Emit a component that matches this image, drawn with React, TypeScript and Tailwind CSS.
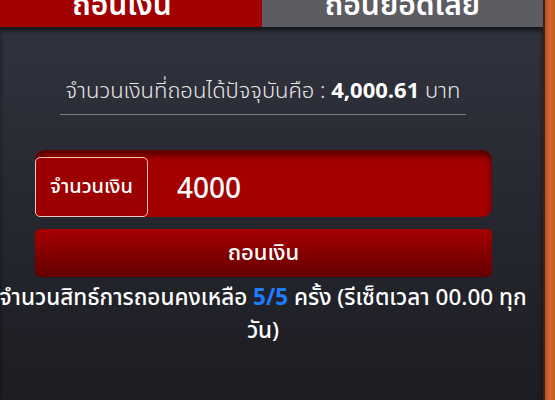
import React from "react";

const thai = { fontFamily: '"Noto Sans Thai", "Noto Sans", "Liberation Sans", sans-serif' };

export default function App() {
  return (
    <div className="w-[555px] h-[400px] flex overflow-hidden bg-[#1d1e24]" style={thai}>
      <div className="w-[543px] h-full flex flex-col">
        <div className="h-[27px] flex shrink-0">
          <div className="w-[262px] bg-[#a10000] overflow-hidden flex justify-center">
            <span className="block text-[30px] leading-[30px] -mt-[9px] -ml-[18px] font-semibold text-white">ถอนเงิน</span>
          </div>
          <div className="flex-1 bg-[#5c5d63] overflow-hidden flex justify-center">
            <span className="block text-[30px] leading-[30px] -mt-[9px] font-semibold text-white">ถอนยอดเสีย</span>
          </div>
        </div>
        <div className="flex-1 flex flex-col bg-gradient-to-b from-[#30323e] to-[#1c1d22] shadow-[inset_0_4px_4px_rgba(0,0,0,0.55)]">
          <div className="pt-[49px] flex flex-col">
            <div className="w-[406px] ml-[60px] text-center text-[22px] leading-[32px] font-light text-[#e6e6e6] pb-[6px] border-b border-[#7d7e88] whitespace-nowrap">
              จำนวนเงินที่ถอนได้ปัจจุบันคือ : <span className="font-bold text-white">4,000.61</span> บาท
            </div>
            <div className="ml-[35px] w-[457px] mt-[35px] h-[67px] rounded-[10px] bg-[#a50000] shadow-[inset_0_5px_6px_rgba(60,0,0,0.8)] flex items-end">
              <div className="w-[113px] h-[60px] rounded-[5px] border border-[#f0c8b8] bg-[#9c0000] flex items-center justify-center text-[20px] text-white font-medium">
                จำนวนเงิน
              </div>
              <div className="h-[60px] flex items-center pl-[29px] text-[28px] text-white font-medium" style={{ fontFamily: '"Noto Sans", sans-serif' }}>
                4000
              </div>
            </div>
            <div className="ml-[35px] w-[457px] mt-[12px] h-[48px] rounded-[5px] bg-gradient-to-b from-[#a60000] to-[#650000] flex items-center justify-center text-[22px] text-white font-medium">
              ถอนเงิน
            </div>
            <div className="flex justify-center w-[526px] mt-[5px]">
              <div className="w-[550px] shrink-0 text-center text-[22.5px] leading-[33px] text-white font-medium">
                จำนวนสิทธ์การถอนคงเหลือ <span className="font-bold text-[#1e7cff]">5/5</span> ครั้ง (รีเซ็ตเวลา 00.00 ทุกวัน)
              </div>
            </div>
          </div>
        </div>
      </div>
      <div className="w-[2px] h-full bg-[#3a2418]" />
      <div className="flex-1 h-full bg-gradient-to-r from-[#b4501e] via-[#d06a30] to-[#c85a25]" />
    </div>
  );
}
